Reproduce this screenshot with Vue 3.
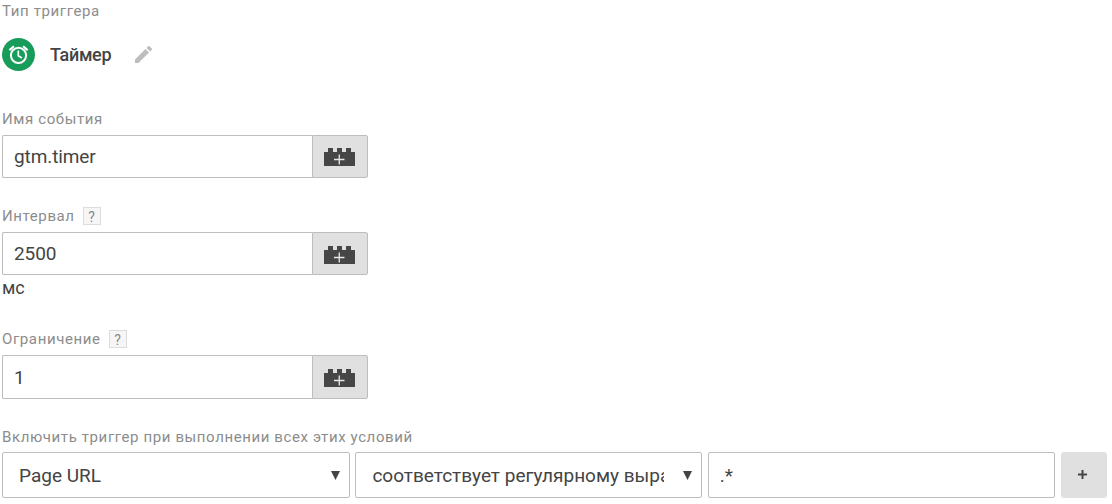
<template>
  <div class="trigger">
    <div class="label">Тип триггера</div>
    <div class="type">
      <svg class="type-icon" viewBox="0 0 33 33">
        <circle cx="16.5" cy="16.5" r="16.5" fill="#179c5a" />
        <g fill="none" stroke="#fff">
          <circle cx="16.5" cy="17.3" r="7.6" stroke-width="2" />
          <path d="M16.3 12.6v5.2l3.6 2.2" stroke-width="1.7" />
          <path d="M7.4 12.1l4.5-3.8M25.6 12.1l-4.5-3.8" stroke-width="2.1" />
        </g>
      </svg>
      <span class="type-name">Таймер</span>
      <svg class="pencil" viewBox="3 3 18 18">
        <path fill="#bdbdbd" d="M3 17.25V21h3.75L17.81 9.94l-3.75-3.75L3 17.25zM20.71 7.04a1 1 0 0 0 0-1.41l-2.34-2.34a1 1 0 0 0-1.41 0l-1.83 1.83 3.75 3.75 1.83-1.83z" />
      </svg>
    </div>

    <div v-for="field in fields" :key="field.name" :class="['field', field.name]">
      <div class="label">
        <span>{{ field.label }}</span>
        <span v-if="field.help" class="help">?</span>
      </div>
      <div class="control">
        <input v-model="field.value" type="text" />
        <button type="button" class="variable">
          <svg viewBox="0 0 31 19">
            <path fill="#464646" d="M0 4h4V0h5v4h4V0h5v4h4V0h5v4h4v14H0z" />
            <path stroke="#e8e8e8" stroke-width="1.3" d="M10 11.5h10.500M15.250 6.500v10" />
          </svg>
        </button>
      </div>
      <div v-if="field.unit" class="unit">{{ field.unit }}</div>
    </div>

    <div class="label">Включить триггер при выполнении всех этих условий</div>
    <div class="condition">
      <div v-for="item in selects" :key="item" class="select">
        <span class="select-text">{{ item }}</span>
        <svg class="arrow" viewBox="0 0 9 9"><path fill="#444" d="M0 0h9L4.500 9z" /></svg>
      </div>
      <input v-model="pattern" class="pattern" type="text" />
      <button type="button" class="add">
        <svg viewBox="0 0 9 9"><path stroke="#444" stroke-width="2" d="M0 4.500h9M4.500 0v9" /></svg>
      </button>
    </div>
  </div>
</template>

<script setup>
import { ref } from 'vue';

const fields = ref([
  { name: 'event', label: 'Имя события', value: 'gtm.timer' },
  { name: 'interval', label: 'Интервал', value: '2500', help: true, unit: 'мс' },
  { name: 'limit', label: 'Ограничение', value: '1', help: true }
]);

const selects = ['Page URL', 'соответствует регулярному выражению'];
const pattern = ref('.*');
</script>

<style>
body {
  background: #fff;
}
</style>

<style scoped>
.trigger {
  box-sizing: border-box;
  width: 1112px;
  height: 504px;
  padding: 1px 5px 0 2px;
  overflow: hidden;
  font-family: Roboto, "Liberation Sans", sans-serif;
  color: #444;
}

.trigger * {
  box-sizing: border-box;
}

.label {
  display: flex;
  align-items: center;
  height: 20px;
  font-size: 15px;
  letter-spacing: 0.61px;
  color: #8c8c8c;
  white-space: nowrap;
}

.help {
  width: 18px;
  height: 18px;
  margin-left: 8px;
  border: 1px solid #dcdcdc;
  background: #f6f6f6;
  font-size: 14px;
  line-height: 18px;
  letter-spacing: 0;
  text-align: center;
  color: #888;
}

.type {
  display: flex;
  align-items: center;
  height: 33px;
  margin: 17px 0 38px;
}

.type-icon {
  width: 33px;
  height: 33px;
}

.type-name {
  width: 61px;
  margin-left: 15px;
  font-size: 18px;
  font-weight: 500;
  letter-spacing: -0.3px;
  white-space: nowrap;
}

.pencil {
  width: 17px;
  height: 17px;
  margin-left: 24px;
}

input {
  min-width: 0;
  margin: 0;
  border: 1px solid #bdbdbd;
  outline: none;
  background: #fff;
  font-family: inherit;
  font-size: 19px;
  letter-spacing: -0.1px;
  color: #444;
}

.control {
  display: flex;
  width: 366px;
  height: 43px;
  margin-top: 6px;
}

.control input {
  flex: 1;
  padding: 0 11px;
  border-right: 0;
  border-radius: 2px 0 0 2px;
}

.variable {
  display: flex;
  align-items: center;
  justify-content: center;
  width: 56px;
  padding: 2px 2px 0 0;
  border: 1px solid #bdbdbd;
  border-radius: 0 2px 2px 0;
  background: #e0e0e0;
}

.variable svg {
  width: 31px;
  height: 19px;
}

.interval .variable {
  padding-top: 4px;
}

.field {
  margin-bottom: 28px;
}

.unit {
  height: 26px;
  font-size: 18px;
  line-height: 26px;
}

.limit .control {
  height: 44px;
}

.condition {
  display: grid;
  grid-template-columns: 348px 347px 347.4px 46px;
  column-gap: 5.4px;
  height: 46px;
  margin-top: 5px;
}

.select {
  display: flex;
  align-items: center;
  min-width: 0;
  padding: 0 9px 0 16px;
  border: 1px solid #bdbdbd;
  border-radius: 2px;
  background: #fff;
  font-size: 19px;
}

.select-text {
  flex: 1;
  overflow: hidden;
  margin-right: 19px;
  white-space: nowrap;
}

.arrow {
  width: 9px;
  height: 9px;
}

.pattern {
  padding: 0 11px;
  border-radius: 2px;
}

.add {
  display: flex;
  align-items: center;
  justify-content: center;
  padding: 0 2px 2px 0;
  border: 0;
  border-radius: 3px;
  background: #e0e0e0;
}

.add svg {
  width: 9px;
  height: 9px;
}
</style>
